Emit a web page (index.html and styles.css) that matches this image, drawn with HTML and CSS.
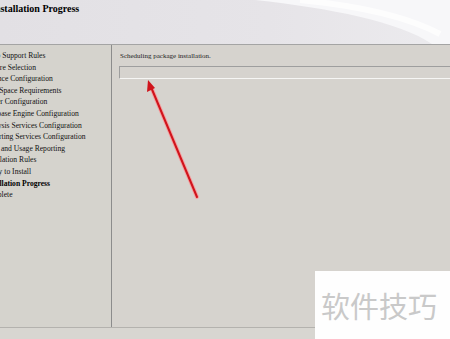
FILE: index.html
```html
<!DOCTYPE html>
<html lang="en">
<head>
    <meta charset="UTF-8">
    <title>Installation Progress</title>
    <link rel="stylesheet" href="styles.css">
</head>
<body>

<div id="header">
    <svg class="swoosh" width="450" height="44" viewBox="0 0 450 44">
        <path d="M255 0 C330 8 400 22 432 44 L450 44 L450 0 Z" fill="#f7f7f9"/>
        <path d="M300 0 C360 6 410 18 440 34" stroke="#ffffff" stroke-width="6" fill="none" opacity="0.7"/>
    </svg>
    <div class="title">Installation Progress</div>
</div>

<div id="main">
    <ul id="steps">
        <li>Setup Support Rules</li>
        <li>Feature Selection</li>
        <li>Instance Configuration</li>
        <li>Disk Space Requirements</li>
        <li>Server Configuration</li>
        <li>Database Engine Configuration</li>
        <li>Analysis Services Configuration</li>
        <li>Reporting Services Configuration</li>
        <li>Error and Usage Reporting</li>
        <li>Installation Rules</li>
        <li>Ready to Install</li>
        <li class="current">Installation Progress</li>
        <li>Complete</li>
    </ul>
    <div id="content">
        <div class="status">Scheduling package installation.</div>
        <div class="progress"></div>
    </div>
</div>

<div id="footer"></div>

<svg class="arrow" width="450" height="339" viewBox="0 0 450 339">
    <line x1="197" y1="197" x2="151" y2="87" stroke="#f4a0a0" stroke-width="4" stroke-linecap="round"/>
    <line x1="197" y1="197" x2="151" y2="87" stroke="#d0141c" stroke-width="2" stroke-linecap="round"/>
    <polygon points="148,80 147,92 155,88" fill="#d0141c"/>
</svg>

<div class="watermark">软件技巧</div>

</body>
</html>
```

FILE: styles.css
```css
body {
    margin: 0;
    width: 450px;
    height: 339px;
    overflow: hidden;
    position: relative;
    background-color: #d6d3ce;
    font-family: "Liberation Serif", "DejaVu Serif", serif;
    color: #000;
}
#header {
    position: relative;
    height: 44px;
    background: linear-gradient(90deg, #e2e0e4, #e6e4e8 60%, #ecebee);
    border-bottom: 1px solid #a4a4a4;
    overflow: hidden;
}
.swoosh {
    position: absolute;
    left: 0;
    top: 0;
}
.title {
    position: relative;
    margin-left: -9px;
    padding-top: 3px;
    font-size: 10px;
    font-weight: bold;
}
#main {
    display: flex;
    height: 282px;
}
#steps {
    list-style: none;
    margin: 0;
    padding: 5px 0 0 0;
    width: 111px;
    border-right: 1px solid #8c8c8c;
    background-color: #d5d3cd;
    overflow: hidden;
}
#steps li {
    margin-left: -17px;
    font-size: 7.6px;
    line-height: 11.6px;
    white-space: nowrap;
    color: #111;
}
#steps li.current {
    font-weight: bold;
    color: #000;
}
#content {
    flex: 1;
    padding: 6px 0 0 7px;
}
.status {
    font-size: 7px;
    line-height: 10px;
    margin-left: 1px;
    color: #222;
}
.progress {
    margin-top: 5px;
    height: 11px;
    border-top: 1px solid #9e9e9e;
    border-left: 1px solid #9e9e9e;
    border-bottom: 1px solid #f6f6f4;
    margin-right: -2px;
}
#footer {
    height: 11px;
    border-top: 1px solid #b4b2ae;
    background-color: #d8d6d1;
}
.arrow {
    position: absolute;
    left: 0;
    top: 0;
}
.watermark {
    position: absolute;
    left: 315px;
    top: 271px;
    width: 135px;
    height: 68px;
    background-color: #fefefe;
    color: #c9c9c9;
    font-family: "Noto Sans CJK SC", sans-serif;
    font-size: 29px;
    line-height: 68px;
    padding-left: 6px;
    box-sizing: border-box;
    letter-spacing: 0px;
}
```
